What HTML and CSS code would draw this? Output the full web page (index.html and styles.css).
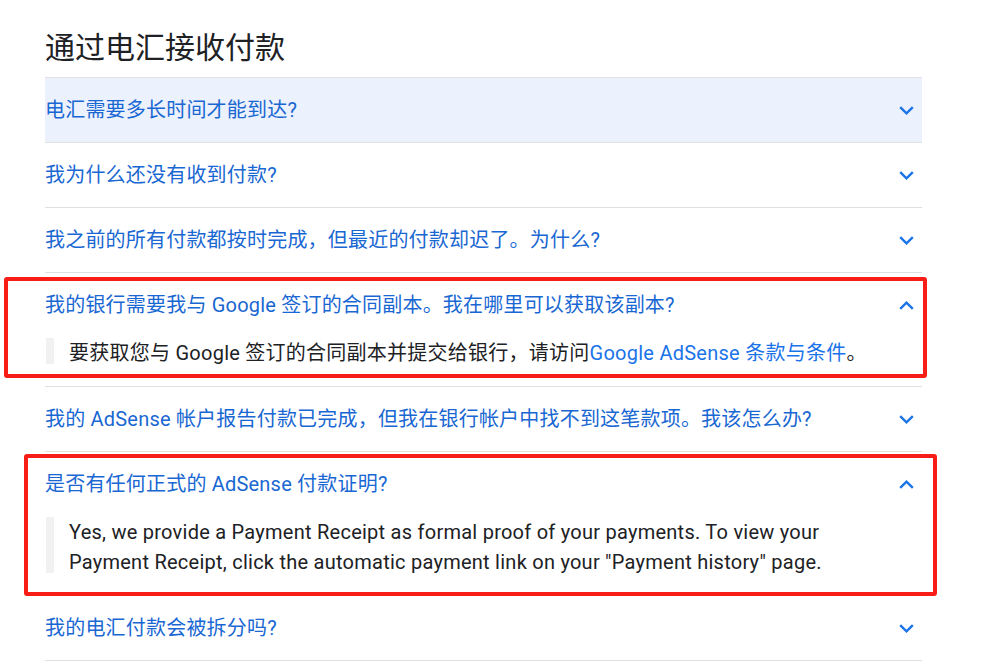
FILE: index.html
```html
<!DOCTYPE html>
<html lang="zh-CN">
<head>
<meta charset="utf-8">
<title>通过电汇接收付款</title>
<link rel="stylesheet" href="styles.css">
</head>
<body>
<main class="page">
  <h1 class="title">通过电汇接收付款</h1>
  <div class="faq">
    <div class="item item--hover">
      <div class="q"><span>电汇需要多长时间才能到达?</span><svg class="chev" viewBox="0 0 15 9" width="15" height="9"><polyline points="1.2,1.2 7.5,7.3 13.8,1.2"/></svg></div>
    </div>
    <div class="item">
      <div class="q"><span>我为什么还没有收到付款?</span><svg class="chev" viewBox="0 0 15 9" width="15" height="9"><polyline points="1.2,1.2 7.5,7.3 13.8,1.2"/></svg></div>
    </div>
    <div class="item">
      <div class="q"><span>我之前的所有付款都按时完成，但最近的付款却迟了。为什么?</span><svg class="chev" viewBox="0 0 15 9" width="15" height="9"><polyline points="1.2,1.2 7.5,7.3 13.8,1.2"/></svg></div>
    </div>
    <div class="item item--open">
      <div class="q"><span>我的银行需要我与 Google 签订的合同副本。我在哪里可以获取该副本?</span><svg class="chev" viewBox="0 0 15 9" width="15" height="9"><polyline points="1.2,7.8 7.5,1.7 13.8,7.8"/></svg></div>
      <div class="a"><p>要获取您与 Google 签订的合同副本并提交给银行，请访问<a class="link" href="#">Google AdSense 条款与条件</a>。</p></div>
    </div>
    <div class="item">
      <div class="q"><span>我的 AdSense 帐户报告付款已完成，但我在银行帐户中找不到这笔款项。我该怎么办?</span><svg class="chev" viewBox="0 0 15 9" width="15" height="9"><polyline points="1.2,1.2 7.5,7.3 13.8,1.2"/></svg></div>
    </div>
    <div class="item item--open">
      <div class="q"><span>是否有任何正式的 AdSense 付款证明?</span><svg class="chev" viewBox="0 0 15 9" width="15" height="9"><polyline points="1.2,7.8 7.5,1.7 13.8,7.8"/></svg></div>
      <div class="a"><p>Yes, we provide a Payment Receipt as formal proof of your payments. To view your Payment Receipt, click the automatic payment link on your "Payment history" page.</p></div>
    </div>
    <div class="item">
      <div class="q"><span>我的电汇付款会被拆分吗?</span><svg class="chev" viewBox="0 0 15 9" width="15" height="9"><polyline points="1.2,1.2 7.5,7.3 13.8,1.2"/></svg></div>
    </div>
  </div>
  <div class="mark mark--one"></div>
  <div class="mark mark--two"></div>
</main>
</body>
</html>
```
FILE: styles.css
```css
html, body {
  margin: 0;
  padding: 0;
  background: #ffffff;
}
body {
  font-family: Roboto, "Noto Sans CJK SC", sans-serif;
  color: #202124;
}
.page {
  position: relative;
  width: 877px;
  padding: 28px 0 0 45px;
}
.title {
  margin: 0 0 9px 0;
  font-size: 30px;
  line-height: 40px;
  font-weight: 400;
  color: #202124;
}
.faq {
  border-top: 1px solid #e0e0e0;
}
.item {
  border-bottom: 1px solid #e0e0e0;
}
.item--hover {
  background: #ebf1fd;
}
.q {
  display: flex;
  align-items: center;
  justify-content: space-between;
  padding: 18px 8px 18px 0;
  font-size: 20px;
  line-height: 28px;
  letter-spacing: 0.2px;
  color: #1967d2;
}
.chev {
  flex: none;
  fill: none;
  stroke: #1a73e8;
  stroke-width: 2.4;
}
.a {
  padding: 1px 0 18px 0;
}
.a p {
  position: relative;
  margin: 0;
  padding: 0 40px 0 24px;
  font-size: 20px;
  line-height: 30px;
  letter-spacing: 0.25px;
  color: #202124;
}
.a p::before {
  content: "";
  position: absolute;
  left: 1px;
  top: 0;
  bottom: 4px;
  width: 8px;
  background: #f1f1f1;
}
.link {
  color: #1a73e8;
  text-decoration: none;
}
.mark {
  position: absolute;
  border: 4px solid #f81d16;
  border-radius: 3px;
  box-sizing: border-box;
}
.mark--one {
  left: 4px;
  top: 277px;
  width: 923px;
  height: 101px;
}
.mark--two {
  left: 24px;
  top: 454px;
  width: 913px;
  height: 142px;
}
```
